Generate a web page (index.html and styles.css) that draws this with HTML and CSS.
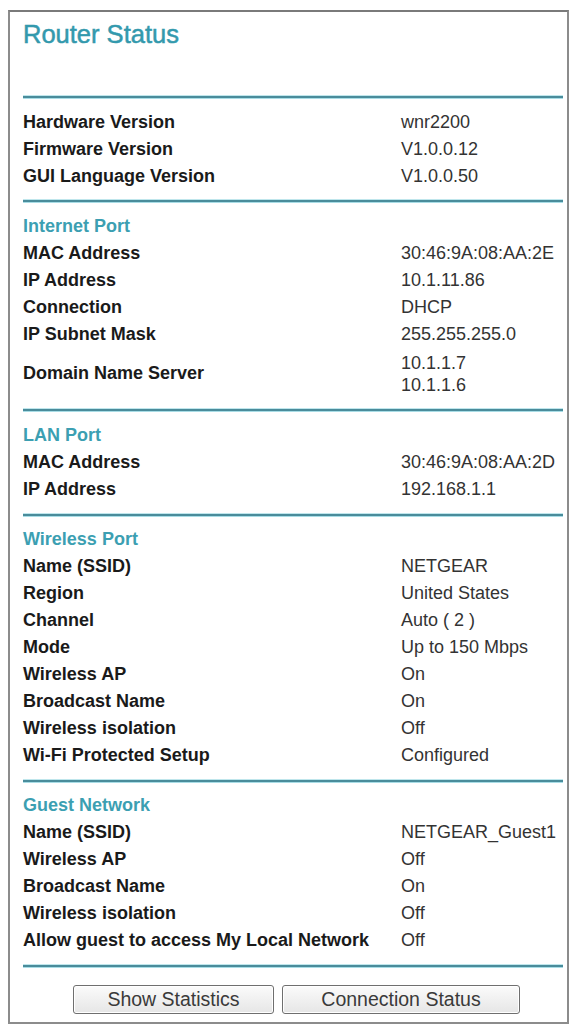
FILE: index.html
```html
<!DOCTYPE html>
<html>
<head>
<meta charset="utf-8">
<title>Router Status</title>
<link rel="stylesheet" href="styles.css">
</head>
<body>
<div class="frame">
  <h1 class="title">Router Status</h1>
  <div class="sep"></div>

  <div class="grid">
    <div class="label">Hardware Version</div><div class="value">wnr2200</div>
    <div class="label">Firmware Version</div><div class="value">V1.0.0.12</div>
    <div class="label">GUI Language Version</div><div class="value">V1.0.0.50</div>
  </div>
  <div class="sep"></div>

  <div class="grid">
    <div class="head">Internet Port</div>
    <div class="label">MAC Address</div><div class="value">30:46:9A:08:AA:2E</div>
    <div class="label">IP Address</div><div class="value">10.1.11.86</div>
    <div class="label">Connection</div><div class="value">DHCP</div>
    <div class="label">IP Subnet Mask</div><div class="value">255.255.255.0</div>
    <div class="label tall">Domain Name Server</div><div class="value tall multi"><span>10.1.1.7</span><span>10.1.1.6</span></div>
  </div>
  <div class="sep"></div>

  <div class="grid">
    <div class="head">LAN Port</div>
    <div class="label">MAC Address</div><div class="value">30:46:9A:08:AA:2D</div>
    <div class="label">IP Address</div><div class="value">192.168.1.1</div>
  </div>
  <div class="sep sep-low"></div>

  <div class="grid">
    <div class="head">Wireless Port</div>
    <div class="label">Name (SSID)</div><div class="value">NETGEAR</div>
    <div class="label">Region</div><div class="value">United States</div>
    <div class="label">Channel</div><div class="value">Auto ( 2 )</div>
    <div class="label">Mode</div><div class="value">Up to 150 Mbps</div>
    <div class="label">Wireless AP</div><div class="value">On</div>
    <div class="label">Broadcast Name</div><div class="value">On</div>
    <div class="label">Wireless isolation</div><div class="value">Off</div>
    <div class="label">Wi-Fi Protected Setup</div><div class="value">Configured</div>
  </div>
  <div class="sep sep-low"></div>

  <div class="grid">
    <div class="head">Guest Network</div>
    <div class="label">Name (SSID)</div><div class="value">NETGEAR_Guest1</div>
    <div class="label">Wireless AP</div><div class="value">Off</div>
    <div class="label">Broadcast Name</div><div class="value">On</div>
    <div class="label">Wireless isolation</div><div class="value">Off</div>
    <div class="label">Allow guest to access My Local Network</div><div class="value">Off</div>
  </div>
  <div class="sep sep-low"></div>

  <div class="buttons">
    <button class="btn btn-stats" type="button">Show Statistics</button>
    <button class="btn btn-conn" type="button">Connection Status</button>
  </div>
</div>
</body>
</html>
```

FILE: styles.css
```css
html, body {
  margin: 0;
  padding: 0;
  background: #ffffff;
}

body {
  font-family: "Liberation Sans", Arial, sans-serif;
  color: #222;
}

.frame {
  box-sizing: border-box;
  margin: 10px 0 0 8px;
  width: 561px;
  height: 1014px;
  border: 2px solid #8c8c8c;
  border-top-color: #7a7a7a;
  padding: 0 4px 0 13px;
}

.title {
  margin: 0;
  padding-top: 7px;
  height: 77px;
  box-sizing: content-box;
  font-size: 25.5px;
  font-weight: normal;
  line-height: 30px;
  color: #3399ad;
  -webkit-text-stroke: 0.5px #3399ad;
}

.sep {
  height: 2px;
  margin: 0 0 11px 0;
  background: #4a8c9b;
  box-shadow: 0 -1px 0 #bfe6ec, 0 1px 0 #a9dde6;
}

.grid + .sep {
  margin-top: 10px;
}

.grid + .sep-low {
  margin-top: 11px;
  margin-bottom: 10px;
}

.title + .sep {
  margin-top: 0;
}

.grid {
  display: grid;
  grid-template-columns: 378px 1fr;
}

.label, .value, .head {
  height: 27px;
  line-height: 27px;
  font-size: 18px;
  white-space: nowrap;
}

.label {
  font-weight: bold;
  color: #1a1a1a;
}

.value {
  color: #333;
}

.head {
  grid-column: 1 / 3;
  font-weight: bold;
  color: #3c9fb2;
}

.tall {
  height: 51px;
  line-height: 51px;
}

.multi {
  display: flex;
  flex-direction: column;
  justify-content: center;
  line-height: 22px;
}

.buttons {
  display: flex;
  gap: 8px;
  padding: 8px 0 0 50px;
}

.btn {
  box-sizing: border-box;
  height: 29px;
  border: 1px solid #6f6f6f;
  border-radius: 3px;
  background: linear-gradient(#fbfbfb, #e6e6e6);
  font-family: "Liberation Sans", Arial, sans-serif;
  font-size: 19.5px;
  color: #3a3a3a;
  padding: 0;
  box-shadow: inset 0 0 0 1px #ffffff;
}

.btn-stats {
  width: 201px;
}

.btn-conn {
  width: 238px;
}
```
